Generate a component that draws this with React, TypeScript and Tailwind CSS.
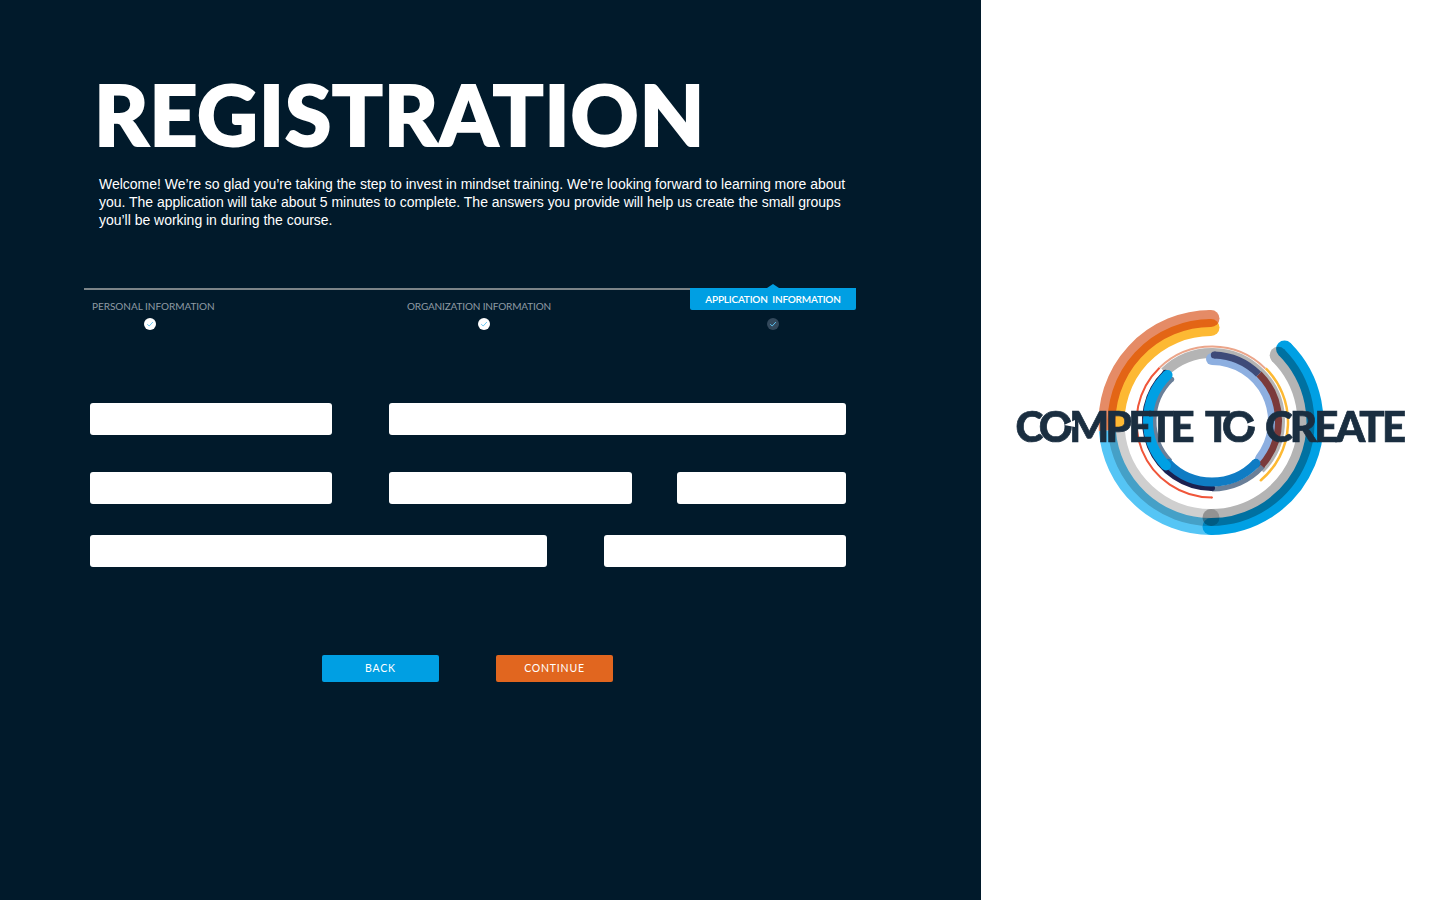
import React from "react";

const C1: [number, number] = [1211, 422.5];
const C2: [number, number] = [1212, 421];

function pt(c: [number, number], r: number, a: number): [number, number] {
  const t = (a * Math.PI) / 180;
  return [c[0] + r * Math.sin(t), c[1] - r * Math.cos(t)];
}

function Arc({ c, r, w, from, to, color, capFrom, capTo, multiply }: {
  c: [number, number]; r: number; w: number; from: number; to: number; color: string;
  capFrom?: boolean; capTo?: boolean; multiply?: boolean;
}) {
  const [x1, y1] = pt(c, r, from);
  const [x2, y2] = pt(c, r, to);
  const large = to - from > 180 ? 1 : 0;
  return (
    <g className={multiply ? "mix-blend-multiply" : ""}>
      <path d={`M${x1} ${y1}A${r} ${r} 0 ${large} 1 ${x2} ${y2}`} fill="none" stroke={color} strokeWidth={w} />
      {capFrom && <circle cx={x1} cy={y1} r={w / 2} fill={color} />}
      {capTo && <circle cx={x2} cy={y2} r={w / 2} fill={color} />}
    </g>
  );
}

function Word({ x, width, children }: { x: number; width: number; children: string }) {
  return (
    <text
      x={x}
      y="441.5"
      textLength={width}
      lengthAdjust="spacing"
      fill="#1A2E40"
      stroke="#1A2E40"
      strokeWidth="0.7"
      fontSize="42"
      fontWeight="900"
      fontFamily="Lato, sans-serif"
    >
      {children}
    </text>
  );
}

function Logo() {
  return (
    <svg width="400" height="233" viewBox="1011 306 400 233" className="block isolate">
      <Arc c={C1} r={104} w={17} from={265.5} to={360} color="#E58B66" capTo />
      <Arc c={C1} r={95} w={17} from={265.5} to={360} color="#FDB933" capTo multiply />
      <Arc c={C1} r={104} w={17} from={180} to={265.5} color="#55C5F5" />
      <Arc c={C1} r={104} w={17} from={45} to={180} color="#00A0E4" capFrom capTo />
      <Arc c={C1} r={95} w={17} from={180} to={265.5} color="#CFCFCF" capFrom multiply />
      <Arc c={C1} r={95} w={17} from={45} to={180} color="#B4B4B4" capFrom capTo multiply />

      <Arc c={[1212, 422]} r={75.5} w={2} from={180} to={316} color="#F0563A" capFrom />
      <Arc c={[1212, 422]} r={75.5} w={2} from={316} to={405} color="#EBA58A" />
      <Arc c={[1212, 422]} r={76} w={2.5} from={45} to={140} color="#FDB933" capTo />

      <Arc c={C2} r={68} w={10} from={316} to={495} color="#B4B4B4" />
      <Arc c={C2} r={62} w={12} from={0} to={128} color="#8DAFE0" capFrom capTo />
      <Arc c={C2} r={66} w={7} from={2} to={45} color="#3E4A78" capFrom />
      <Arc c={C2} r={66.5} w={7} from={45} to={132} color="#7B3A3A" capTo />
      <Arc c={C2} r={68} w={5} from={132} to={180} color="#6A7F98" />
      <Arc c={C2} r={58} w={5} from={226} to={316} color="#6A7F98" capTo />
      <Arc c={C2} r={67} w={6} from={180} to={316} color="#1B2150" capFrom capTo />
      <Arc c={C2} r={61} w={9} from={134} to={226} color="#0F7CC4" capFrom capTo />
      <Arc c={C2} r={64} w={10} from={226} to={316} color="#00A0E4" capFrom capTo />

      <Word x={1015.5} width={179}>COMPETE</Word>
      <Word x={1205} width={51}>TO</Word>
      <Word x={1265} width={141}>CREATE</Word>
      <polygon points="1064,425 1075,420 1075,427" fill="#fff" />
      <polygon points="1244,425 1256,420 1256,427" fill="#fff" />
    </svg>
  );
}

function Tick({ active }: { active?: boolean }) {
  return (
    <span className={`flex h-3 w-3 items-center justify-center rounded-full ${active ? "bg-[#33495C]" : "bg-white"}`}>
      <svg width="8" height="8" viewBox="0 0 8 8" fill="none">
        <path d="M1.2 4.2 3.2 6 6.9 2" stroke={active ? "#5CC0EE" : "#6CC8F2"} strokeWidth="1" />
      </svg>
    </span>
  );
}

function Field({ className }: { className: string }) {
  return <div className={`h-8 rounded-[3px] bg-white ${className}`} />;
}

export default function App() {
  return (
    <div className="flex h-[900px] w-full overflow-hidden bg-white font-['Liberation_Sans',sans-serif]">
      <main className="h-full w-[981px] shrink-0 bg-[#011A2B]">
        <h1 className="ml-[94px] mt-[66px] h-[96px] text-[84px] font-black leading-[96px] tracking-[0.8px] text-white font-['Lato',sans-serif] [-webkit-text-stroke:2px_white]">
          REGISTRATION
        </h1>
        <p className="ml-[99px] mt-[13px] text-[14px] leading-[18px] tracking-[-0.02px] text-white">
          Welcome! We’re so glad you’re taking the step to invest in mindset training. We’re looking forward to learning more about
          <br />
          you. The application will take about 5 minutes to complete. The answers you provide will help us create the small groups
          <br />
          you’ll be working in during the course.
        </p>

        <div className="ml-[84px] mt-[59px] flex w-[772px] font-['Lato',sans-serif]">
          <div className="flex w-[606px] border-t-2 border-[#7C8488]">
            <div className="w-[316px] pl-2 pt-[9px]">
              <div className="text-[10px] leading-[14px] tracking-[-0.03px] text-[#8F9BA4]">PERSONAL INFORMATION</div>
              <div className="ml-[52px] mt-[5px]"><Tick /></div>
            </div>
            <div className="w-[290px] pl-[7px] pt-[9px]">
              <div className="text-[10px] leading-[14px] tracking-[-0.15px] text-[#8F9BA4]">ORGANIZATION INFORMATION</div>
              <div className="ml-[71px] mt-[5px]"><Tick /></div>
            </div>
          </div>
          <div className="flex w-[166px] flex-col items-center">
            <div className="relative flex h-[22px] w-full items-center justify-center rounded-b-[2px] bg-[#009FE3] pt-px text-[10px] font-semibold tracking-[-0.2px] text-white">
              <span className="absolute -top-1 left-1/2 h-0 w-0 -translate-x-1/2 border-x-[6px] border-b-[4px] border-x-transparent border-b-[#009FE3]" />
              APPLICATION&nbsp; INFORMATION
            </div>
            <div className="mt-2"><Tick active /></div>
          </div>
        </div>

        <div className="ml-[90px] mt-[73px] flex w-[756px] flex-col">
          <div className="flex justify-between">
            <Field className="w-[242px]" />
            <Field className="w-[457px]" />
          </div>
          <div className="mt-[37px] flex">
            <Field className="w-[242px]" />
            <Field className="ml-[57px] w-[243px]" />
            <Field className="ml-[45px] w-[169px]" />
          </div>
          <div className="mt-[31px] flex justify-between">
            <Field className="w-[457px]" />
            <Field className="w-[242px]" />
          </div>
        </div>

        <div className="ml-[322px] mt-[88px] flex gap-[57px] font-['Lato',sans-serif]">
          <button className="h-[27px] w-[117px] rounded-[2px] bg-[#009FE3] text-[10.5px] tracking-[0.8px] text-white">BACK</button>
          <button className="h-[27px] w-[117px] rounded-[2px] bg-[#E1661F] text-[10.5px] tracking-[0.8px] text-white">CONTINUE</button>
        </div>
      </main>
      <aside className="flex flex-1 justify-center pt-[306px]">
        <Logo />
      </aside>
    </div>
  );
}
